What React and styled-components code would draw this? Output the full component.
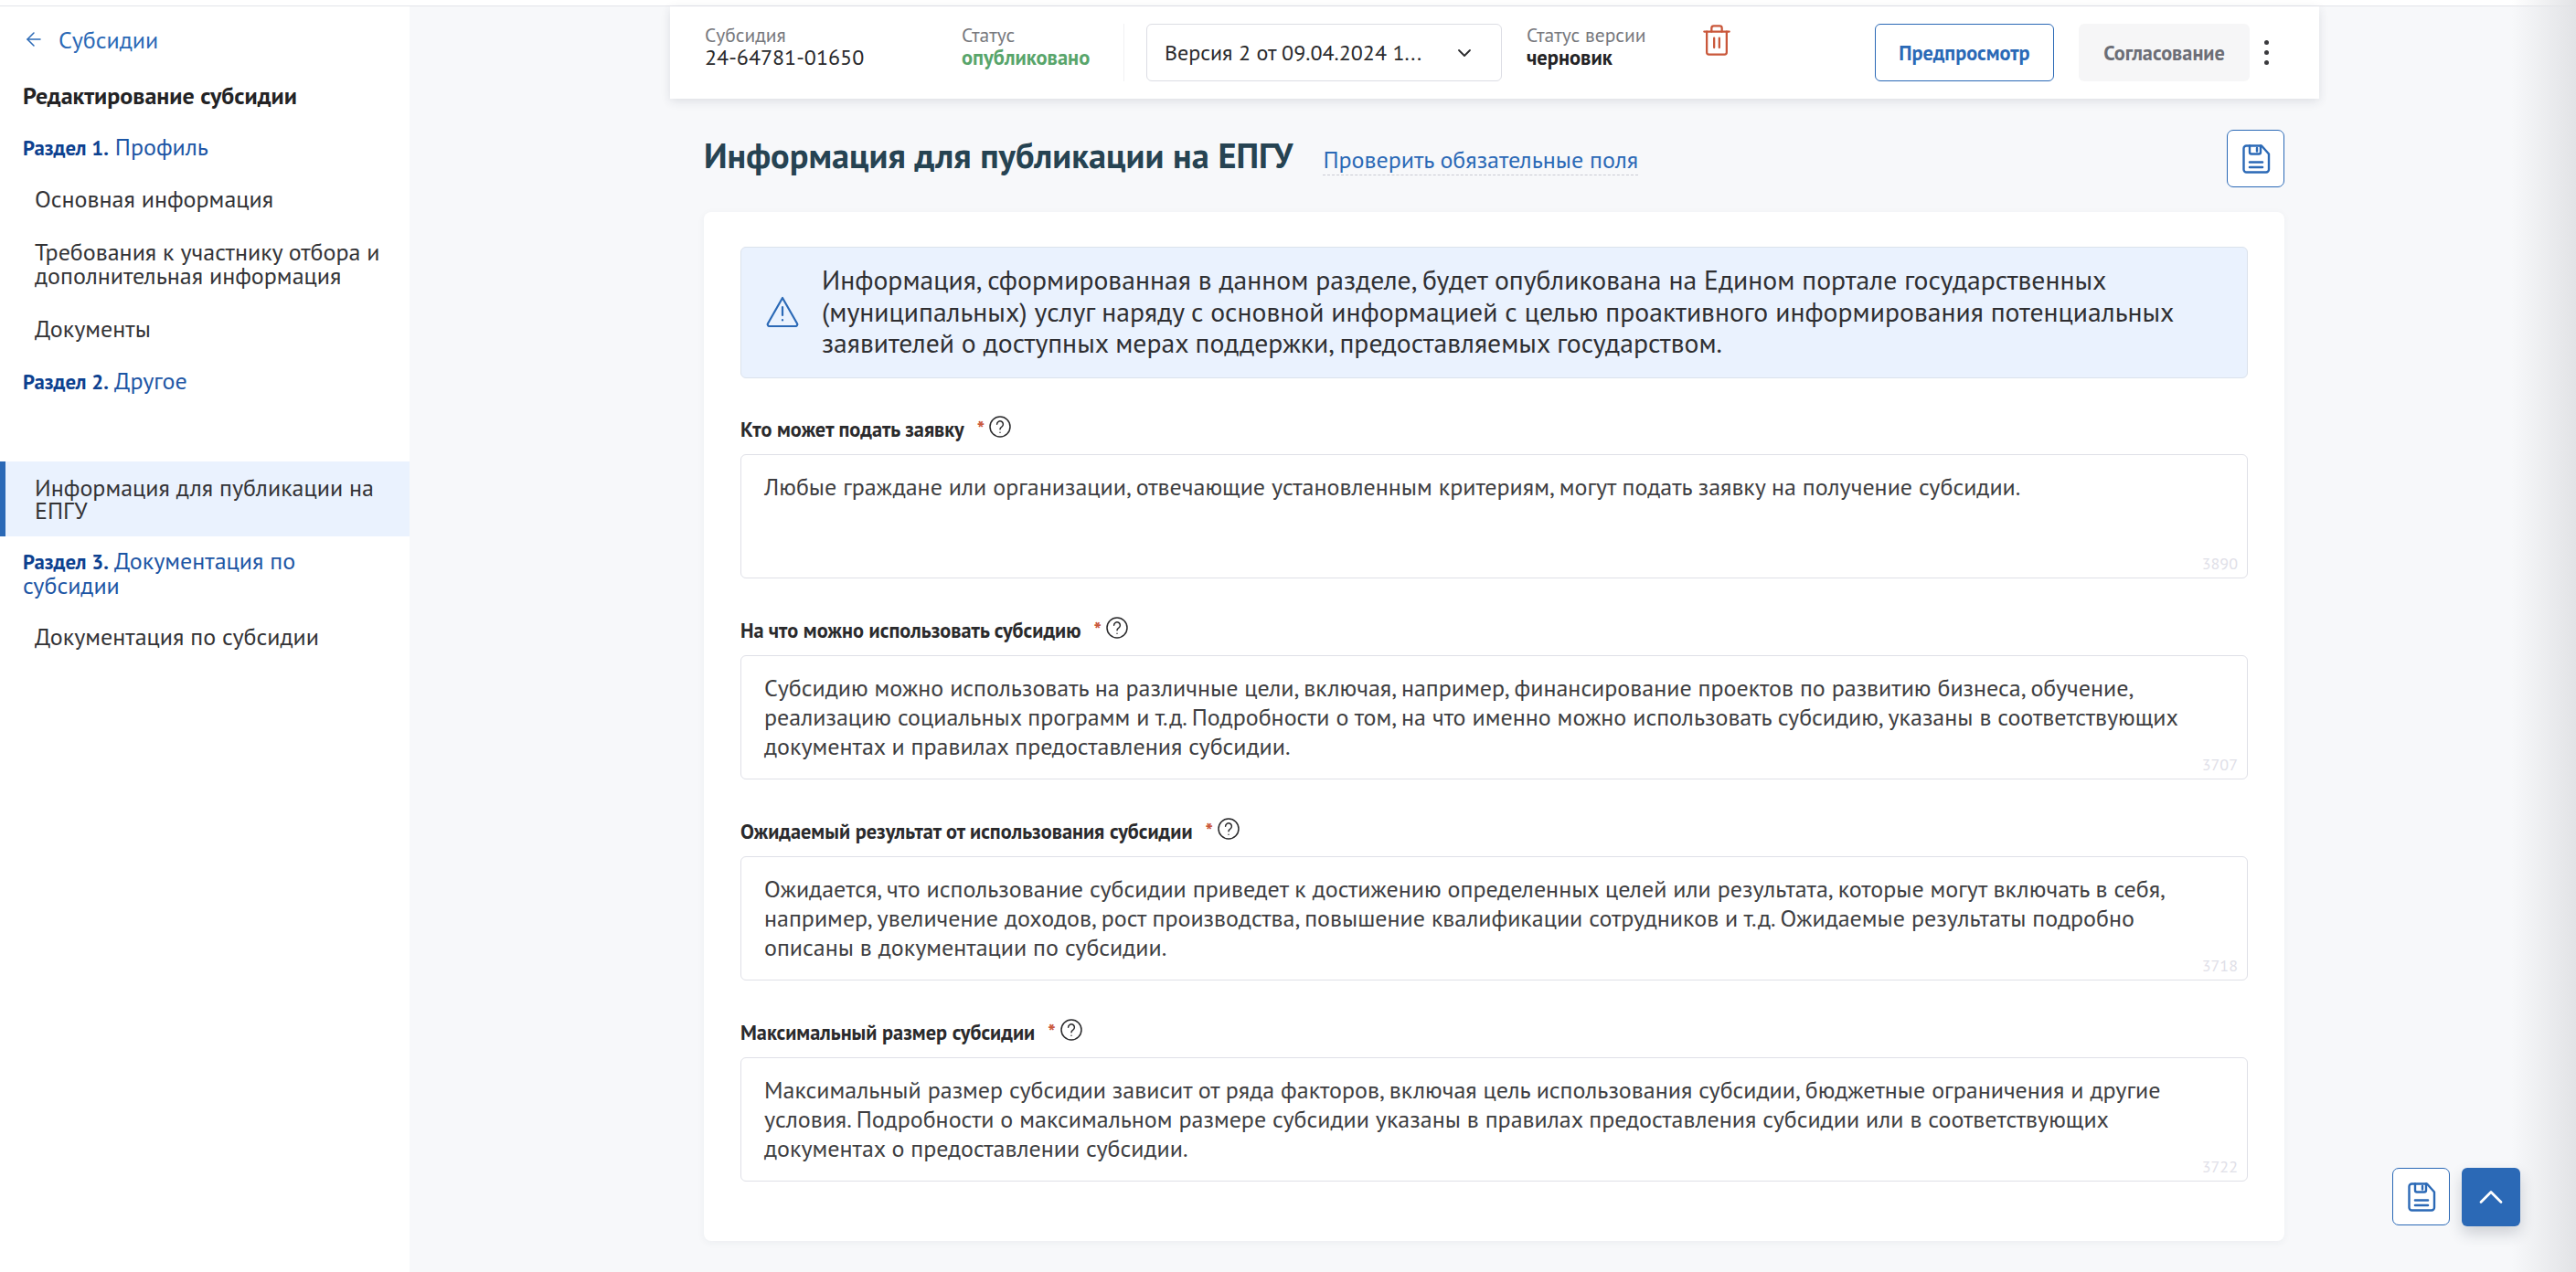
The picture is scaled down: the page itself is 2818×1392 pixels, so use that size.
import React from "react";
import styled, { createGlobalStyle } from "styled-components";
import { ArrowLeft, ChevronDown, ChevronUp } from "lucide-react";

const GlobalStyle = createGlobalStyle`
  html, body {
    margin: 0;
    padding: 0;
    background: #f7f8fa;
  }
  body {
    font-family: "PT Sans", "Noto Sans", sans-serif;
    color: #2a2a2c;
    overflow: hidden;
  }
  * {
    box-sizing: border-box;
  }
`;

const Page = styled.div`
  position: relative;
  height: 1392px;
  overflow: hidden;
  display: flex;
  flex-direction: column;
`;

const TopStrip = styled.div`
  height: 7px;
  flex: none;
  background: #fff;
  border-bottom: 1px solid #e3e4e9;
`;

const Body = styled.div`
  flex: 1;
  display: flex;
  min-height: 0;
`;

const EdgeShade = styled.div`
  position: absolute;
  top: 0;
  right: 0;
  bottom: 0;
  width: 70px;
  background: linear-gradient(to right, rgba(225, 226, 229, 0), #e2e3e6);
  pointer-events: none;
`;

/* sidebar */
const Sidebar = styled.aside`
  width: 448px;
  flex: none;
  background: #fff;
  padding-top: 20px;
`;

const BackLink = styled.a`
  display: flex;
  align-items: center;
  gap: 15px;
  padding-left: 25px;
  height: 32px;
  font-size: 26px;
  color: #2b69b6;
`;

const SideTitle = styled.div`
  margin-top: 33px;
  padding-left: 25px;
  font-size: 26px;
  line-height: 26px;
  font-weight: 700;
  color: #232325;
`;

const Section = styled.div`
  margin-top: ${(p) => p.$top || 0}px;
  padding: 14px 25px;
  font-size: 26px;
  line-height: 26px;
  color: #1d56a5;
  b {
    font-size: 22.75px;
    color: #0d4190;
  }
`;

const NavItem = styled.div`
  margin-top: ${(p) => p.$top || 0}px;
  padding: 16px 26px 16px ${(p) => (p.$active ? 32 : 38)}px;
  font-size: 26px;
  line-height: ${(p) => (p.$active ? 25 : 26)}px;
  color: #333336;
  background: ${(p) => (p.$active ? "#eaf2fe" : "transparent")};
  border-left: ${(p) => (p.$active ? "6px solid #2b69b6" : "none")};
`;

/* main column */
const Main = styled.main`
  width: 1804px;
  margin-left: 285px;
  flex: none;
`;

const Toolbar = styled.div`
  height: 101px;
  display: flex;
  align-items: center;
  background: #fff;
  padding-left: 38px;
  box-shadow: 0 3px 10px rgba(40, 50, 70, 0.12);
`;

const Field = styled.div`
  width: ${(p) => p.$width}px;
  flex: none;
  display: flex;
  flex-direction: column;
  margin-top: -13px;
`;

const FieldLabel = styled.span`
  font-size: 21.5px;
  line-height: 24px;
  color: #77787d;
`;

const FieldValue = styled.span`
  font-size: 24px;
  line-height: 26px;
  color: #2a2a2c;
`;

const StatusValue = styled.span`
  font-size: 22.5px;
  line-height: 26px;
  font-weight: 700;
  color: ${(p) => p.$color};
`;

const Divider = styled.div`
  width: 1px;
  height: 63px;
  background: #f0f1f3;
  flex: none;
  margin-right: 24px;
`;

const VersionSelect = styled.div`
  width: 389px;
  height: 63px;
  flex: none;
  display: flex;
  align-items: center;
  justify-content: space-between;
  padding: 0 28px 0 19px;
  border: 1px solid #dcdde4;
  border-radius: 6px;
  font-size: 24px;
  color: #2a2a2c;
  margin-right: 27px;
`;

const TrashButton = styled.div`
  width: 32px;
  height: 34px;
  flex: none;
  color: #c9573a;
  margin-top: -27px;
  svg {
    display: block;
  }
`;

const Button = styled.div`
  height: 63px;
  width: ${(p) => p.$width}px;
  flex: none;
  display: flex;
  align-items: center;
  justify-content: center;
  margin-left: ${(p) => p.$left}px;
  border-radius: 6px;
  font-size: 22.25px;
  font-weight: 700;
  color: ${(p) => (p.$primary ? "#2b69b6" : "#6c6e76")};
  background: ${(p) => (p.$primary ? "#fff" : "#f6f6f7")};
  border: ${(p) => (p.$primary ? "1px solid #2b69b6" : "none")};
`;

const MoreDots = styled.div`
  margin-left: 16px;
  display: flex;
  flex-direction: column;
  gap: 6px;
  i {
    display: block;
    width: 5px;
    height: 5px;
    border-radius: 50%;
    background: #3a3a3e;
  }
`;

const PageHead = styled.div`
  margin: 34px 38px 27px 37px;
  height: 63px;
  display: flex;
  align-items: center;
`;

const PageTitle = styled.h1`
  margin: 0;
  margin-top: -7px;
  font-size: 38.4px;
  font-weight: 700;
  color: #264352;
`;

const CheckLink = styled.a`
  margin-left: 33px;
  margin-top: 4px;
  font-size: 26px;
  line-height: 32px;
  color: #2b69b6;
  border-bottom: 1px dashed #c9cbd3;
`;

const IconButton = styled.div`
  width: 63px;
  height: 63px;
  flex: none;
  display: flex;
  align-items: center;
  justify-content: center;
  border: 1px solid #2b69b6;
  border-radius: 7px;
  background: #fff;
  color: #2b69b6;
  margin-left: ${(p) => (p.$push ? "auto" : 0)};
`;

const Card = styled.div`
  margin: 0 38px 0 37px;
  height: 1126px;
  padding: 38px 40px 0;
  background: #fff;
  border-radius: 8px;
  box-shadow: 0 2px 8px rgba(40, 50, 70, 0.05);
`;

const Notice = styled.div`
  height: 144px;
  display: flex;
  align-items: center;
  gap: 25px;
  padding: 0 60px 2px 27px;
  background: #eaf2fe;
  border: 1px solid #dbe2ec;
  border-radius: 6px;
  font-size: 29.7px;
  line-height: 34.5px;
  color: #2f2f32;
  svg {
    flex: none;
  }
`;

const FieldBlock = styled.div`
  margin-top: ${(p) => p.$top}px;
`;

const FieldHead = styled.div`
  height: 47px;
  padding-bottom: 8px;
  display: flex;
  align-items: center;
  font-size: 22.3px;
  font-weight: 700;
  color: #2a2a2c;
`;

const Required = styled.span`
  margin-left: 14px;
  color: #c9573a;
  font-weight: 700;
`;

const Help = styled.span`
  display: flex;
  margin-left: 5px;
  margin-top: -5px;
  color: #2a2a2c;
`;

const TextBox = styled.div`
  position: relative;
  height: 136px;
  padding: 18.5px 25px 0;
  border: 1px solid #dfe0e7;
  border-radius: 6px;
  font-size: 26px;
  line-height: 32px;
  color: #3e3e41;
`;

const Counter = styled.span`
  position: absolute;
  right: 10px;
  bottom: 5px;
  font-size: 18px;
  line-height: 20px;
  color: #dfe0e8;
`;

const FloatingBar = styled.div`
  position: fixed;
  right: 61px;
  bottom: 50px;
  display: flex;
  gap: 13px;
`;

const ScrollTop = styled.div`
  width: 64px;
  height: 64px;
  display: flex;
  align-items: center;
  justify-content: center;
  border-radius: 6px;
  background: #2b69b6;
  color: #fff;
  box-shadow: 0 8px 16px rgba(40, 50, 70, 0.2);
`;

const SaveIcon = () => (
  <svg width="32" height="32" viewBox="0 0 32 32" fill="none" stroke="currentColor" strokeWidth="2.4" strokeLinejoin="round" strokeLinecap="round">
    <path d="M5.5 1.5h16.5l8 9v17a3 3 0 0 1-3 3H5.5a3 3 0 0 1-3-3v-23a3 3 0 0 1 3-3z" />
    <path d="M9 1.5v7a2 2 0 0 0 2 2h8a2 2 0 0 0 2-2v-7" />
    <path d="M17 4v3.5" />
    <path d="M9 19.5h14M9 25h14" strokeWidth="2.6" />
  </svg>
);

const TrashIcon = () => (
  <svg width="32" height="34" viewBox="0 0 32 36" fill="none" stroke="currentColor" strokeWidth="2.4" strokeLinecap="round" strokeLinejoin="round">
    <path d="M1.5 8h29" />
    <path d="M10 8V4a2.5 2.5 0 0 1 2.5-2.5h7A2.5 2.5 0 0 1 22 4v4" />
    <path d="M4.5 8v24a2.5 2.5 0 0 0 2.5 2.5h18a2.5 2.5 0 0 0 2.5-2.5V8" />
    <path d="M13 15.5v11M19 15.5v11" />
  </svg>
);

const WarningIcon = () => (
  <svg width="36" height="34" viewBox="0 0 36 34" fill="none" stroke="#2b69b6" strokeWidth="2.2" strokeLinecap="round" strokeLinejoin="round">
    <path d="M18 2 2 30a2 2 0 0 0 1.8 3h28.4a2 2 0 0 0 1.8-3z" />
    <path d="M18 12v9" />
    <path d="M18 26v.5" />
  </svg>
);

const HelpIcon = () => (
  <svg width="24" height="24" viewBox="0 0 24 24" fill="none" stroke="currentColor" strokeWidth="1.5" strokeLinecap="round">
    <circle cx="12" cy="12" r="11" />
    <path d="M8.6 9.2a3.4 3.4 0 1 1 5.2 2.9c-1.2.7-1.8 1.4-1.8 2.6" />
    <path d="M12 18.2v.1" />
  </svg>
);

const fields = [
  {
    label: "Кто может подать заявку",
    text: "Любые граждане или организации, отвечающие установленным критериям, могут подать заявку на получение субсидии.",
    count: 3890,
    top: 36,
  },
  {
    label: "На что можно использовать субсидию",
    text: "Субсидию можно использовать на различные цели, включая, например, финансирование проектов по развитию бизнеса, обучение, реализацию социальных программ и т.д. Подробности о том, на что именно можно использовать субсидию, указаны в соответствующих документах и правилах предоставления субсидии.",
    count: 3707,
    top: 37,
  },
  {
    label: "Ожидаемый результат от использования субсидии",
    text: "Ожидается, что использование субсидии приведет к достижению определенных целей или результата, которые могут включать в себя, например, увеличение доходов, рост производства, повышение квалификации сотрудников и т.д. Ожидаемые результаты подробно описаны в документации по субсидии.",
    count: 3718,
    top: 37,
  },
  {
    label: "Максимальный размер субсидии",
    text: "Максимальный размер субсидии зависит от ряда факторов, включая цель использования субсидии, бюджетные ограничения и другие условия. Подробности о максимальном размере субсидии указаны в правилах предоставления субсидии или в соответствующих документах о предоставлении субсидии.",
    count: 3722,
    top: 37,
  },
];

const App = () => {
  return (
    <Page>
      <GlobalStyle />
      <TopStrip />
      <Body>
        <Sidebar>
          <BackLink>
            <ArrowLeft size={24} strokeWidth={1.5} />
            Субсидии
          </BackLink>
          <SideTitle>Редактирование субсидии</SideTitle>
          <Section $top={16}>
            <b>Раздел 1.</b> Профиль
          </Section>
          <NavItem>Основная информация</NavItem>
          <NavItem>Требования к участнику отбора и дополнительная информация</NavItem>
          <NavItem>Документы</NavItem>
          <Section $top={1}>
            <b>Раздел 2.</b> Другое
          </Section>
          <NavItem $active $top={60}>
            Информация для публикации на ЕПГУ
          </NavItem>
          <Section>
            <b>Раздел 3.</b> Документация по субсидии
          </Section>
          <NavItem>Документация по субсидии</NavItem>
        </Sidebar>

        <Main>
          <Toolbar>
            <Field $width={281}>
              <FieldLabel>Субсидия</FieldLabel>
              <FieldValue>24-64781-01650</FieldValue>
            </Field>
            <Field $width={177}>
              <FieldLabel>Статус</FieldLabel>
              <StatusValue $color="#58a56b">опубликовано</StatusValue>
            </Field>
            <Divider />
            <VersionSelect>
              Версия 2 от 09.04.2024 1...
              <ChevronDown size={24} strokeWidth={1.8} />
            </VersionSelect>
            <Field $width={192}>
              <FieldLabel>Статус версии</FieldLabel>
              <StatusValue $color="#232325">черновик</StatusValue>
            </Field>
            <TrashButton>
              <TrashIcon />
            </TrashButton>
            <Button $primary $width={196} $left={157}>
              Предпросмотр
            </Button>
            <Button $width={187} $left={27}>
              Согласование
            </Button>
            <MoreDots>
              <i />
              <i />
              <i />
            </MoreDots>
          </Toolbar>

          <PageHead>
            <PageTitle>Информация для публикации на ЕПГУ</PageTitle>
            <CheckLink>Проверить обязательные поля</CheckLink>
            <IconButton $push>
              <SaveIcon />
            </IconButton>
          </PageHead>

          <Card>
            <Notice>
              <WarningIcon />
              Информация, сформированная в данном разделе, будет опубликована на Едином портале государственных (муниципальных) услуг наряду с основной информацией с целью проактивного информирования потенциальных заявителей о доступных мерах поддержки, предоставляемых государством.
            </Notice>
            {fields.map((field) => (
              <FieldBlock key={field.count} $top={field.top}>
                <FieldHead>
                  {field.label}
                  <Required>*</Required>
                  <Help>
                    <HelpIcon />
                  </Help>
                </FieldHead>
                <TextBox>
                  {field.text}
                  <Counter>{field.count}</Counter>
                </TextBox>
              </FieldBlock>
            ))}
          </Card>
        </Main>
      </Body>
      <EdgeShade />
      <FloatingBar>
        <IconButton>
          <SaveIcon />
        </IconButton>
        <ScrollTop>
          <ChevronUp size={44} strokeWidth={1.5} />
        </ScrollTop>
      </FloatingBar>
    </Page>
  );
};

export default App;
